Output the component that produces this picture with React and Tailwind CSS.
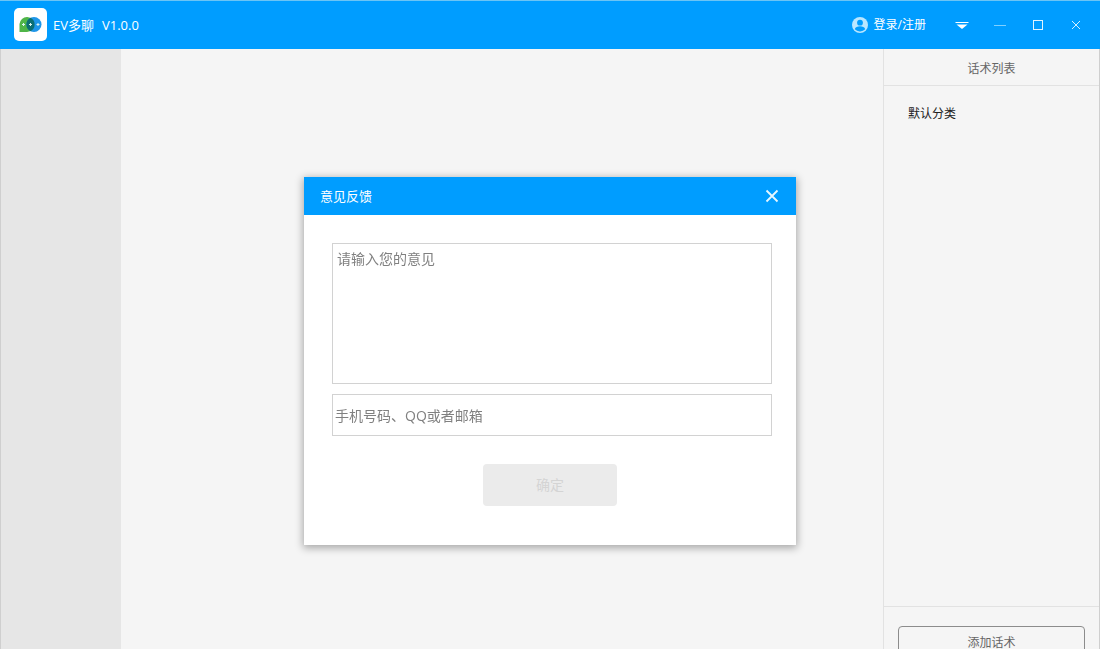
import React, { useState } from 'react';

const Logo = () => (
  <svg viewBox="0 0 33 33" className="h-[33px] w-[33px] shrink-0" aria-hidden="true">
    <rect width="33" height="33" rx="5" fill="#ffffff" />
    <path d="M5.500 24v-8a7.500 7.500 0 1 1 7.500 8z" fill="#4fb548" />
    <circle cx="20" cy="16.500" r="7.500" fill="#1e96e8" />
    <path d="M16.500 9.800a7.500 7.500 0 0 1 0 13.400a7.500 7.500 0 0 1 0-13.400z" fill="#0b6f73" />
    <path
      d="M9.500 15v3M8 16.500h3M16.500 15v3M15 16.500h3M24 15v3M22.500 16.500h3"
      stroke="#d9f4f0"
      strokeWidth="1"
    />
  </svg>
);

const UserIcon = () => (
  <svg viewBox="0 0 16 16" className="h-4 w-4" aria-hidden="true">
    <circle cx="8" cy="8" r="8" fill="#b9e6ff" />
    <circle cx="8" cy="5.700" r="2.900" fill="#009dff" />
    <path d="M2.800 12.300c.6-2.200 2.700-3 5.200-3s4.600.8 5.200 3A7 7 0 0 1 8 14.400a7 7 0 0 1-5.200-2.100z" fill="#009dff" />
  </svg>
);

const windowButtons = [
  {
    label: '菜单',
    icon: (
      <>
        <path d="M1.500 5.500h13" stroke="#ffffff" />
        <path d="M2.500 7.500h11L8 12z" fill="#ffffff" />
      </>
    ),
  },
  { label: '最小化', icon: <path d="M2 8.500h12" stroke="#7fd0ff" /> },
  { label: '最大化', icon: <rect x="3.500" y="3.500" width="9" height="9" fill="none" stroke="#e0f4ff" /> },
  { label: '关闭', icon: <path d="M4 4l8 8M12 4l-8 8" fill="none" stroke="#d5f0ff" /> },
];

const TitleBar = () => (
  <header className="flex h-[49px] shrink-0 items-center justify-between border-t border-[#6cc4f5] bg-[#009dff] pb-px pl-3.5 pr-4 text-white">
    <div className="flex items-center">
      <Logo />
      <h1 className="ml-1.5 text-[13px] leading-5">EV多聊</h1>
      <span className="ml-2 text-[13px] leading-5">V1.0.0</span>
    </div>
    <div className="flex items-center">
      <button type="button" className="mr-7 flex items-center gap-1.5 text-xs">
        <UserIcon />
        登录/注册
      </button>
      <div className="flex gap-[22px]">
        {windowButtons.map((item) => (
          <button key={item.label} type="button" aria-label={item.label} className="h-4 w-4">
            <svg viewBox="0 0 16 16" className="h-4 w-4">{item.icon}</svg>
          </button>
        ))}
      </div>
    </div>
  </header>
);

const ScriptPanel = () => (
  <aside className="flex w-[217px] shrink-0 flex-col border-l border-r border-[#e2e2e2] border-r-[#cfcfcf]">
    <h2 className="border-b border-[#e2e2e2] pb-2 pt-3 text-center text-xs text-[#666666]">话术列表</h2>
    <ul className="flex-1 px-6 py-5 text-xs text-[#222222]">
      <li>默认分类</li>
    </ul>
    <div className="h-[43px] shrink-0 overflow-hidden border-t border-[#e2e2e2] px-3.5 pt-[19px]">
      <button type="button" className="h-[34px] w-full rounded border border-[#8c8c8c] text-xs text-[#666666]">
        添加话术
      </button>
    </div>
  </aside>
);

const FeedbackDialog = ({ onClose }) => {
  const [content, setContent] = useState('');
  const [contact, setContact] = useState('');

  return (
    <div className="fixed inset-0 flex items-start justify-center pt-[177px]">
      <form
        role="dialog"
        aria-labelledby="feedback-title"
        onSubmit={(e) => e.preventDefault()}
        className="w-[492px] bg-white shadow-[0_2px_8px_1px_rgba(0,0,0,0.32)]"
      >
        <div className="flex h-[38px] items-center justify-between bg-[#009dff] px-4 text-white">
          <h2 id="feedback-title" className="text-[13px] leading-5">意见反馈</h2>
          <button type="button" aria-label="关闭" onClick={onClose} className="h-4 w-4">
            <svg viewBox="0 0 16 16" className="h-4 w-4">
              <path d="M2.500 2.500l11 11M13.500 2.500l-11 11" stroke="#e6f7ff" strokeWidth="1.800" />
            </svg>
          </button>
        </div>
        <div className="flex flex-col pl-7 pr-6 pt-7">
          <textarea
            aria-label="意见"
            placeholder="请输入您的意见"
            value={content}
            onChange={(e) => setContent(e.target.value)}
            className="h-[141px] resize-none border border-[#d2d2d2] px-1 py-[5px] text-sm outline-none placeholder:text-[#808080]"
          />
          <input
            type="text"
            aria-label="联系方式"
            placeholder="手机号码、QQ或者邮箱"
            value={contact}
            onChange={(e) => setContact(e.target.value)}
            className="mt-2.5 h-[42px] border border-[#d2d2d2] px-0.5 text-sm outline-none placeholder:text-[#808080]"
          />
        </div>
        <div className="flex justify-center pb-[39px] pt-7">
          <button
            type="submit"
            disabled={!content}
            className="h-[42px] w-[134px] rounded bg-[#009dff] text-sm text-white disabled:bg-[#ebebeb] disabled:text-[#d4d4d4]"
          >
            确定
          </button>
        </div>
      </form>
    </div>
  );
};

const App = () => {
  const [showFeedback, setShowFeedback] = useState(true);

  return (
    <div className="flex h-screen flex-col overflow-hidden bg-[#f5f5f5] font-['Open_Sans','Noto_Sans_CJK_SC',sans-serif]">
      <TitleBar />
      <div className="flex min-h-0 flex-1">
        <nav className="w-[121px] shrink-0 border-l border-[#cfcfcf] bg-[#e6e6e6]" />
        <main className="flex-1" />
        <ScriptPanel />
      </div>
      {showFeedback && <FeedbackDialog onClose={() => setShowFeedback(false)} />}
    </div>
  );
};

export default App;
